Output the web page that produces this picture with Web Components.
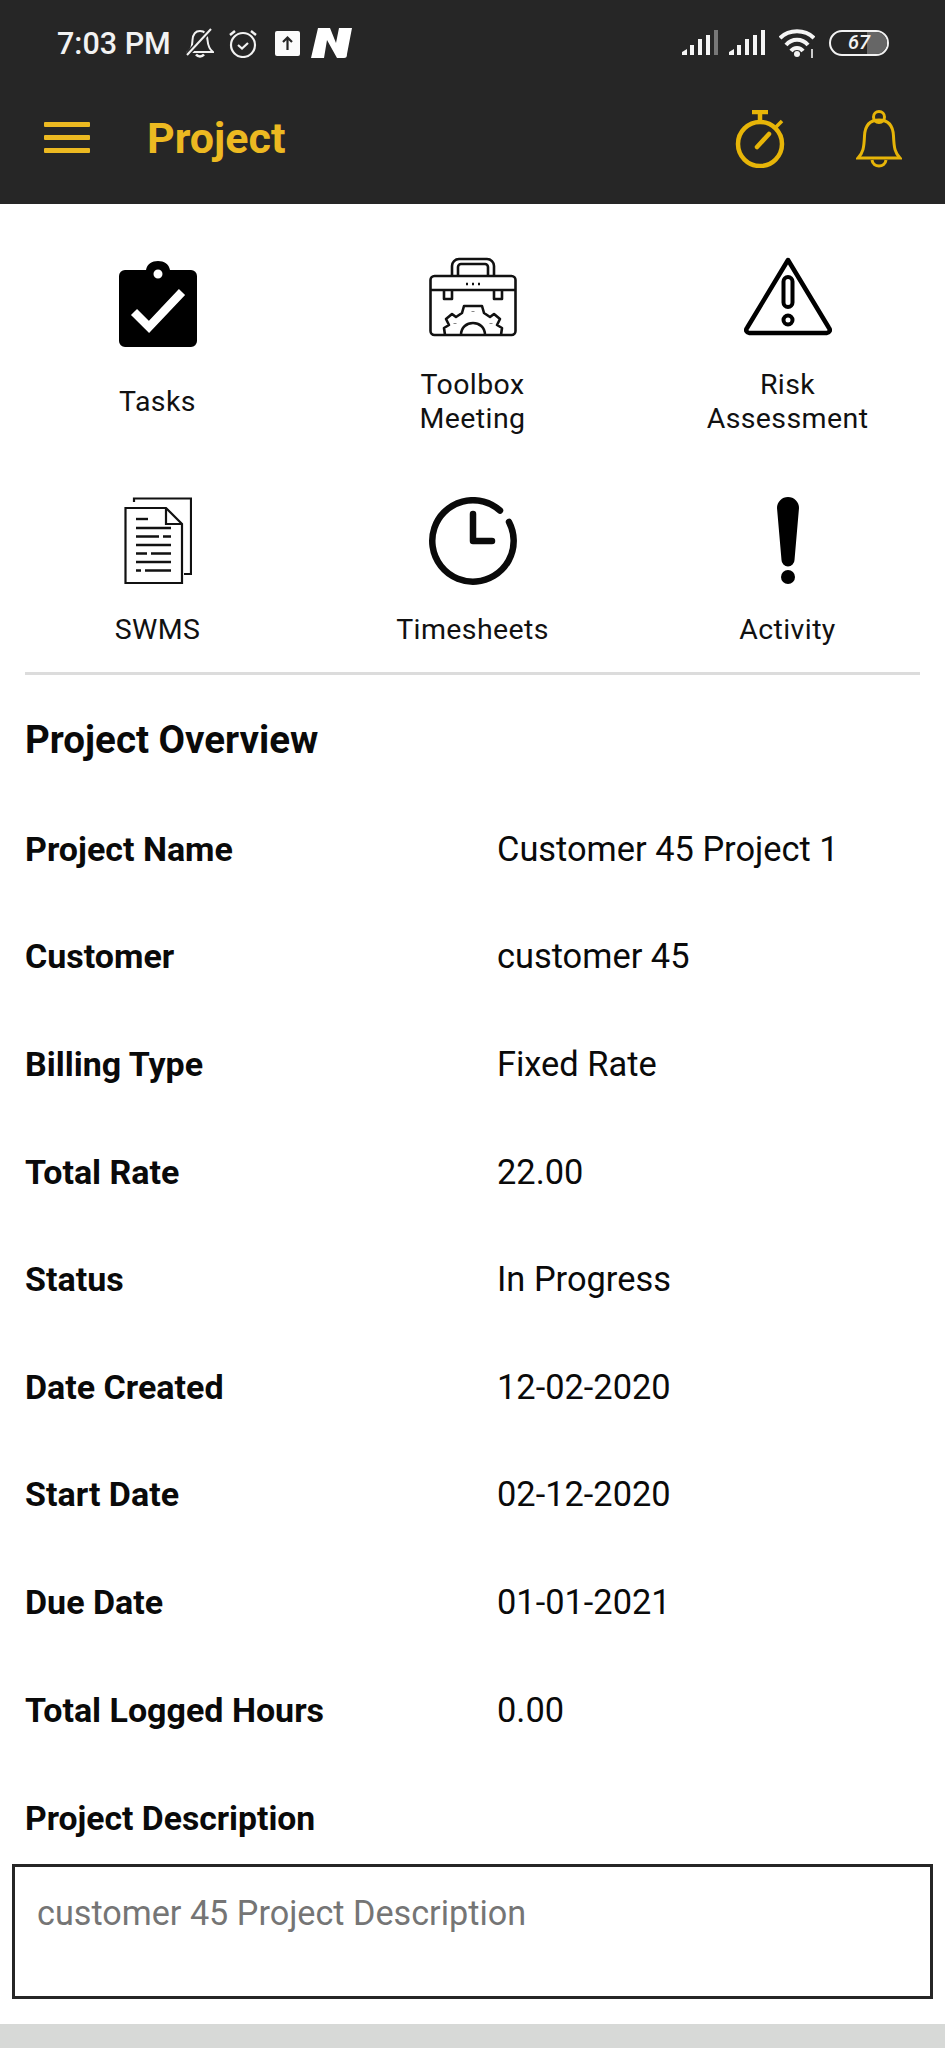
<!DOCTYPE html>
<html>
<head>
<meta charset="utf-8">
<style>
  html, body { margin: 0; padding: 0; background: #fff; }
  body { width: 945px; height: 2048px; overflow: hidden; font-family: Roboto, "Liberation Sans", sans-serif; }
</style>
</head>
<body>
<project-screen></project-screen>

<script>
const icons = {
  tasks: `<svg style="margin-top:4px" width="78" height="86" viewBox="0 0 78 86"><path fill-rule="evenodd" fill="#000" d="M6 9H27C28 3 33 0 39 0s11 3 12 9H72a6 6 0 0 1 6 6V80a6 6 0 0 1-6 6H6a6 6 0 0 1-6-6V15a6 6 0 0 1 6-6ZM39 8.500a4.500 4.500 0 1 0 0 9a4.500 4.500 0 0 0 0-9Z"/><path d="M15 51L30 66L63 31" fill="none" stroke="#fff" stroke-width="8.500"/></svg>`,
  toolbox: `<svg width="88" height="80" viewBox="0 0 88 80" fill="none" stroke="#111" stroke-width="2.600" stroke-linejoin="round"><rect x="1.500" y="19" width="85" height="59" rx="4"/><path d="M1.500 33H86.500"/><path d="M23 19V9a7 7 0 0 1 7-7H58a7 7 0 0 1 7 7V19M29 19V10a3 3 0 0 1 3-3H56a3 3 0 0 1 3 3V19"/><path d="M15 33V42H23V33M65 33V42H73V33"/><path d="M16 78L15 71L20 68L17 62L23 57L27 60L33 56L35 49H44H53L55 56L61 60L65 57L71 62L68 68L73 71L72 78"/><path d="M32 78C32 62 56 62 56 78"/><path d="M37 27H39M43 27H45M49 27H51"/><path d="M44 54.500V55M26 66V66.500M62 66V66.500" stroke-width="3"/></svg>`,
  risk: `<svg width="88" height="79" viewBox="0 0 88 79" fill="none" stroke="#000"><path d="M44 3L85 71a3 3 0 0 1-2.500 5H5.500a3 3 0 0 1-2.500-5Z" stroke-width="4.500" stroke-linejoin="round"/><rect x="39.500" y="20" width="9" height="30" rx="4.500" stroke-width="4"/><circle cx="44" cy="63" r="4.500" stroke-width="4"/></svg>`,
  swms: `<svg width="68" height="88" viewBox="0 0 68 88" fill="none" stroke="#111" stroke-width="2.200"><path d="M10 5V1.500H67V77H60"/><path d="M1.500 11H42L58 27V86H1.500Z"/><path d="M42 11V27H58"/><g stroke-width="2.400"><path d="M12 22H24"/><path d="M12 31H47"/><path d="M12 39.500H35M39 39.500H47"/><path d="M12 48H47"/><path d="M12 56.500H23M27 56.500H47"/><path d="M12 65H47"/><path d="M12 73.500H17M21 73.500H47"/></g></svg>`,
  clock: `<svg width="88" height="88" viewBox="0 0 88 88" fill="none" stroke="#0a0a0a" stroke-width="6.500" stroke-linecap="round" stroke-linejoin="round"><path d="M71 13.500A40.700 40.700 0 1 0 80 25"/><path d="M44 17V44H63"/></svg>`,
  activity: `<svg width="22" height="87" viewBox="0 0 22 87"><path fill="#000" d="M0 11a11 11 0 0 1 22 0L17.500 63a6.500 6.500 0 0 1-13 0Z"/><circle cx="11" cy="80" r="7" fill="#000"/></svg>`
};

class StatusBar extends HTMLElement {
  constructor() {
    super();
    this.attachShadow({ mode: "open" });
    this.shadowRoot.innerHTML = `
    <style>
      :host { display: flex; align-items: center; height: 86px; padding: 0 56px 0 57px; color: #f2f2f2; }
      .time { font: 500 30.500px Roboto, sans-serif; margin-right: 15px; }
      .left, .right { display: flex; align-items: center; }
      .right { margin-left: auto; }
      svg { display: block; }
      .batt { position: relative; width: 60px; height: 26px; box-sizing: border-box; border: 2.500px solid #f2f2f2; border-radius: 13px; overflow: hidden; text-align: center; font: italic 500 20px/21px Roboto, sans-serif; }
      .batt::before { content: ""; position: absolute; left: 36px; right: 0; top: 0; bottom: 0; background: #666; }
      .batt span { position: relative; }
    </style>
    <div class="left">
      <span class="time">7:03 PM</span>
      <svg style="margin-right:14px" width="28" height="30" viewBox="0 0 28 30" fill="none" stroke="#f2f2f2" stroke-width="2"><path d="M2 24C6 21 6 18 6.500 12C7 6 10 3 14 3s7 3 7.500 9C22 18 23 21 27 24H2Z"/><path d="M10 26.500C12 29 16 29 18 26.500" stroke-width="2.500"/><path d="M1 27L25 1" stroke="#262626" stroke-width="5"/><path d="M1 27L25 1"/></svg>
      <svg style="margin-right:17px" width="30" height="30" viewBox="0 0 30 30" fill="none" stroke="#f2f2f2" stroke-width="2.200"><circle cx="15" cy="17" r="12"/><path d="M10 17L14 20.500L20 15"/><path d="M2 7L7 3M28 7L23 3" stroke-width="2.500"/></svg>
      <svg style="margin-right:11px" width="25" height="25" viewBox="0 0 25 25"><rect width="25" height="25" rx="2" fill="#fbfbfb"/><path d="M12.500 19V7M8 11L12.500 6.500L17 11" fill="none" stroke="#262626" stroke-width="2.200"/></svg>
      <svg width="41" height="32" viewBox="0 0 41 32"><path fill="#fff" d="M7 1H19L25 16L28 1H41L36 27C36 30 35 31 33 31H26L16 13L13 31H0Z"/></svg>
    </div>
    <div class="right">
      <svg style="margin-right:11px" width="36" height="26" viewBox="0 0 36 26"><path d="M0 22L5 19V25H0Z M8 15H12V25H8Z M16 9H20V25H16Z M24 5H28V25H24Z" fill="#f5f5f5"/><rect x="32" y="0" width="4" height="25" fill="#777"/></svg>
      <svg style="margin-right:14px" width="36" height="26" viewBox="0 0 36 26"><path d="M0 22L5 19V25H0Z M8 15H12V25H8Z M16 9H20V25H16Z M24 5H28V25H24Z M32 0H36V25H32Z" fill="#f5f5f5"/></svg>
      <svg style="margin:4px 14px 0 0" width="36" height="34" viewBox="0 0 36 34" fill="none" stroke="#f5f5f5" stroke-width="4"><path d="M1 10C10 1 26 1 35 10"/><path d="M7 17C13 10 23 10 29 17"/><path d="M12 23C15 19 21 19 24 23"/><circle cx="18" cy="26" r="3" fill="#f5f5f5" stroke="none"/><path d="M33 21V30" stroke-width="1.600"/></svg>
      <div class="batt"><span>67</span></div>
    </div>`;
  }
}

class TopBar extends HTMLElement {
  constructor() {
    super();
    this.attachShadow({ mode: "open" });
    this.shadowRoot.innerHTML = `
    <style>
      :host { display: flex; align-items: center; height: 118px; box-sizing: border-box; padding: 0 43px 16px 44px; color: #ecb921; }
      .burger { width: 46px; display: flex; flex-direction: column; gap: 8px; margin-right: 57px; }
      .burger i { display: block; height: 5px; background: #ecb921; border-radius: 1px; }
      h1 { margin: 2px 0 0; font: 700 43px Roboto, sans-serif; color: #ecb921; }
      .acts { margin: 3px 0 0 auto; display: flex; align-items: center; gap: 71px; }
      svg { display: block; }
    </style>
    <div class="burger"><i></i><i></i><i></i></div>
    <h1><slot></slot></h1>
    <div class="acts">
      <svg width="50" height="58" viewBox="0 0 50 58" fill="none" stroke="#e7b508" stroke-width="4.500"><circle cx="25" cy="34" r="22"/><path d="M25 11V3M17 2H33"/><path d="M41 17L47 11" stroke-width="3.500"/><path d="M22 37L34 24" stroke-linecap="round"/></svg>
      <svg width="46" height="58" viewBox="0 0 46 58" fill="none" stroke="#e7b508" stroke-width="3"><circle cx="23" cy="7" r="5.500"/><path d="M2 48C7 43 8 38 8.500 26C9 15 14 10 23 10s14 5 14.500 16C38 38 39 43 44 48Z"/><path d="M16 50C17 58 29 58 30 50"/></svg>
    </div>`;
  }
}

class NavTile extends HTMLElement {
  constructor() {
    super();
    this.attachShadow({ mode: "open" });
    this.shadowRoot.innerHTML = `
    <style>
      :host { display: flex; flex-direction: column; align-items: center; font: 400 28.500px/34px Roboto, sans-serif; color: #111; text-align: center; letter-spacing: 0.4px; }
      .ic { display: flex; align-items: flex-start; justify-content: center; height: var(--ic-h); }
      svg { display: block; }
      .lbl { display: flex; align-items: center; height: var(--lbl-h); }
    </style>
    <div class="ic"></div>
    <div class="lbl"><div><slot></slot></div></div>`;
  }
  connectedCallback() {
    this.shadowRoot.querySelector(".ic").innerHTML = icons[this.getAttribute("icon")];
  }
}

class InfoRow extends HTMLElement {
  constructor() {
    super();
    this.attachShadow({ mode: "open" });
    this.shadowRoot.innerHTML = `
    <style>
      :host { display: flex; align-items: center; height: 107.600px; color: #0a0a0a; }
      .k { width: 472px; font: 700 34px Roboto, sans-serif; }
      .v { font: 400 34.400px Roboto, sans-serif; }
    </style>
    <div class="k"></div><div class="v"><slot></slot></div>`;
  }
  connectedCallback() {
    this.shadowRoot.querySelector(".k").textContent = this.getAttribute("label");
  }
}

class ProjectScreen extends HTMLElement {
  constructor() {
    super();
    this.attachShadow({ mode: "open" });
    this.shadowRoot.innerHTML = `
    <style>
      :host { display: block; }
      header { background: #262626; height: 204px; display: flex; flex-direction: column; }
      .grid { display: grid; grid-template-columns: repeat(3, 315px); padding-top: 53px; }
      .r1 { height: 240px; --ic-h: 105px; --lbl-h: 80px; }
      .r2 { height: 175px; --ic-h: 116px; --lbl-h: 34px; }
      hr { margin: 0 25px; border: 0; height: 3px; background: #dcdcdc; }
      main { padding: 0 25px; }
      h2 { margin: 0; height: 120px; box-sizing: border-box; padding-top: 8px; display: flex; align-items: center; font: 700 38.500px Roboto, sans-serif; color: #0a0a0a; }
      .dlabel { height: 101px; box-sizing: border-box; padding-top: 9px; display: flex; align-items: center; font: 700 33.700px Roboto, sans-serif; color: #0a0a0a; }
      .desc { margin: 0 12px; height: 135px; box-sizing: border-box; border: 3px solid #262626; padding: 26px 22px; font: 400 34.200px Roboto, sans-serif; color: #757575; }
      .foot { position: absolute; left: 0; right: 0; top: 2024px; bottom: 0; background: #d7d9d7; }
    </style>
    <header>
      <status-bar></status-bar>
      <top-bar>Project</top-bar>
    </header>
    <div class="grid">
      <nav-tile icon="tasks" class="r1">Tasks</nav-tile>
      <nav-tile icon="toolbox" class="r1">Toolbox<br>Meeting</nav-tile>
      <nav-tile icon="risk" class="r1">Risk<br>Assessment</nav-tile>
      <nav-tile icon="swms" class="r2">SWMS</nav-tile>
      <nav-tile icon="clock" class="r2">Timesheets</nav-tile>
      <nav-tile icon="activity" class="r2">Activity</nav-tile>
    </div>
    <hr>
    <main>
      <h2>Project Overview</h2>
      <info-row label="Project Name">Customer 45 Project 1</info-row>
      <info-row label="Customer">customer 45</info-row>
      <info-row label="Billing Type">Fixed Rate</info-row>
      <info-row label="Total Rate">22.00</info-row>
      <info-row label="Status">In Progress</info-row>
      <info-row label="Date Created">12-02-2020</info-row>
      <info-row label="Start Date">02-12-2020</info-row>
      <info-row label="Due Date">01-01-2021</info-row>
      <info-row label="Total Logged Hours">0.00</info-row>
      <div class="dlabel">Project Description</div>
    </main>
    <div class="desc">customer 45 Project Description</div>
    <div class="foot"></div>`;
  }
}

customElements.define("status-bar", StatusBar);
customElements.define("top-bar", TopBar);
customElements.define("nav-tile", NavTile);
customElements.define("info-row", InfoRow);
customElements.define("project-screen", ProjectScreen);
</script>
</body>
</html>
